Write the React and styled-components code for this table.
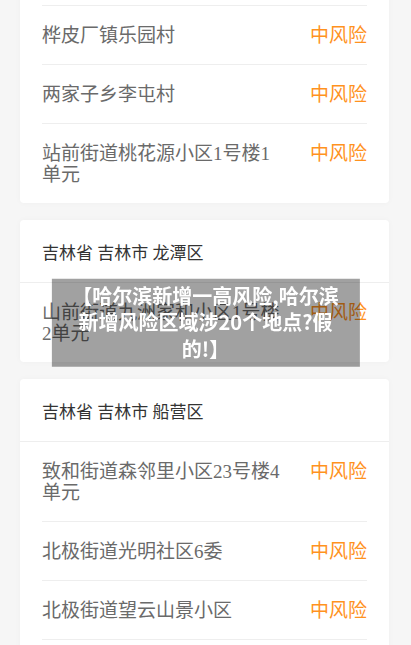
import styled, { createGlobalStyle } from "styled-components";

const areas = [
  {
    region: "黑龙江省 哈尔滨市 呼兰区",
    rows: ["石人镇石人村", "桦皮厂镇乐园村", "两家子乡李屯村", "站前街道桃花源小区1号楼1单元"],
  },
  {
    region: "吉林省 吉林市 龙潭区",
    rows: ["山前街道九洲家和小区1号楼2单元"],
  },
  {
    region: "吉林省 吉林市 船营区",
    rows: ["致和街道森邻里小区23号楼4单元", "北极街道光明社区6委", "北极街道望云山景小区", "北极街道江畔小区"],
  },
];

export default function App() {
  return (
    <>
      <GlobalStyle />
      <Page>
        {areas.map((area, i) => (
          <Card key={area.region}>
            {i > 0 && <CardHead>{area.region}</CardHead>}
            <List>
              {area.rows.map((name) => (
                <Row key={name}>
                  <Place>{name}</Place>
                  <Level>中风险</Level>
                </Row>
              ))}
            </List>
          </Card>
        ))}
      </Page>
      <Toast>【哈尔滨新增一高风险,哈尔滨新增风险区域涉20个地点?假的!】</Toast>
    </>
  );
}

const GlobalStyle = createGlobalStyle`
  html, body {
    margin: 0;
    padding: 0;
    background: #f6f6f6;
    overflow: hidden;
  }
  body {
    font-family: "Liberation Serif", "Noto Sans CJK SC", serif;
  }
`;

const Page = styled.div`
  margin-top: -53px;
  padding: 0 22px 20px 20px;
  display: flex;
  flex-direction: column;
  gap: 17px;
`;

const Card = styled.div`
  background: #fff;
  border-radius: 4px;
  box-shadow: 0 0 6px rgba(0, 0, 0, 0.03);
`;

const CardHead = styled.div`
  height: 62px;
  padding: 0 22px;
  display: flex;
  align-items: center;
  font-size: 17px;
  color: #333;
  border-bottom: 1px solid #eee;
`;

const List = styled.div`
  padding: 0 22px;
`;

const Row = styled.div`
  display: flex;
  justify-content: space-between;
  align-items: flex-start;
  padding: 18.5px 0;
  font-size: 19px;
  line-height: 21px;

  &:not(:last-child) {
    border-bottom: 1px solid #eee;
  }
`;

const Place = styled.div`
  width: 75%;
  color: #6a6a6a;
`;

const Level = styled.div`
  color: #ff921e;
  white-space: nowrap;
`;

const Toast = styled.div`
  position: fixed;
  left: 50%;
  top: 50%;
  transform: translate(-50%, -50%);
  width: 75%;
  box-sizing: border-box;
  padding: 4px 16px 5px;
  background: rgba(0, 0, 0, 0.37);
  color: #fff;
  font-family: "Noto Sans CJK SC", sans-serif;
  font-weight: 700;
  font-size: 20px;
  line-height: 26.5px;
  text-align: center;
`;
